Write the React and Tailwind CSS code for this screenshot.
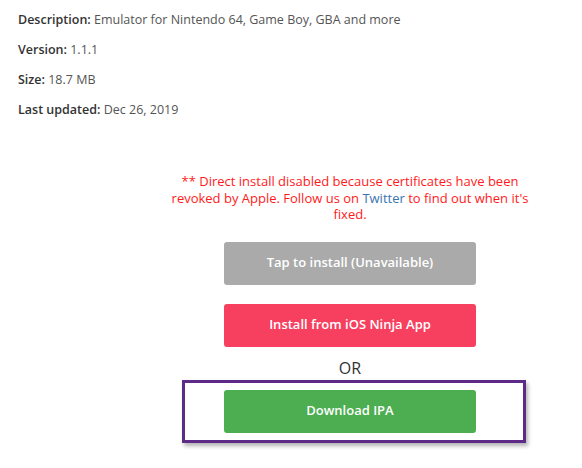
import React from "react";

const details = [
  { label: "Description:", value: "Emulator for Nintendo 64, Game Boy, GBA and more" },
  { label: "Version:", value: "1.1.1" },
  { label: "Size:", value: "18.7 MB" },
  { label: "Last updated:", value: "Dec 26, 2019" },
];

const App = () => {
  return (
    <div className="w-[582px] h-[468px] bg-white overflow-hidden font-['Open_Sans',sans-serif] text-[13px]">
      {/* APP DETAILS */}
      <div className="pl-[18px] pt-[5px] text-[12.5px]">
        {details.map((d) => (
          <p key={d.label} className="leading-[30px] text-[#555]">
            <span className="font-semibold text-[#333]">{d.label}</span> {d.value}
          </p>
        ))}
      </div>

      {/* INSTALL OPTIONS */}
      <div className="w-[364px] ml-[168px] mt-[48px] text-center">
        <p className="text-[#ff1a1a] leading-[16.5px]">
          ** Direct install disabled because certificates have been revoked by Apple. Follow us on{" "}
          <span className="text-[#3a74b0]">Twitter</span> to find out when it's fixed.
        </p>

        <button className="block mx-auto mt-[19px] w-[252px] h-[43px] rounded-[3px] bg-[#aaaaaa] text-white font-semibold">
          Tap to install (Unavailable)
        </button>

        <button className="block mx-auto mt-[19px] w-[252px] h-[43px] rounded-[3px] bg-[#f7405f] text-white font-semibold">
          Install from iOS Ninja App
        </button>

        <p className="mt-[9px] text-[16px] leading-[24px] text-[#333]">OR</p>

        <div className="relative mt-[10px] w-[252px] mx-auto">
          <button className="block w-[252px] h-[43px] rounded-[3px] bg-[#4cae50] text-white font-semibold">
            Download IPA
          </button>
          {/* highlight box */}
          <div className="absolute -left-[42px] -right-[50px] -top-[10px] -bottom-[10px] border-[3px] border-[#5e2a88] shadow-[2px_3px_4px_rgba(0,0,0,0.3)] pointer-events-none" />
        </div>
      </div>
    </div>
  );
};

export default App;
